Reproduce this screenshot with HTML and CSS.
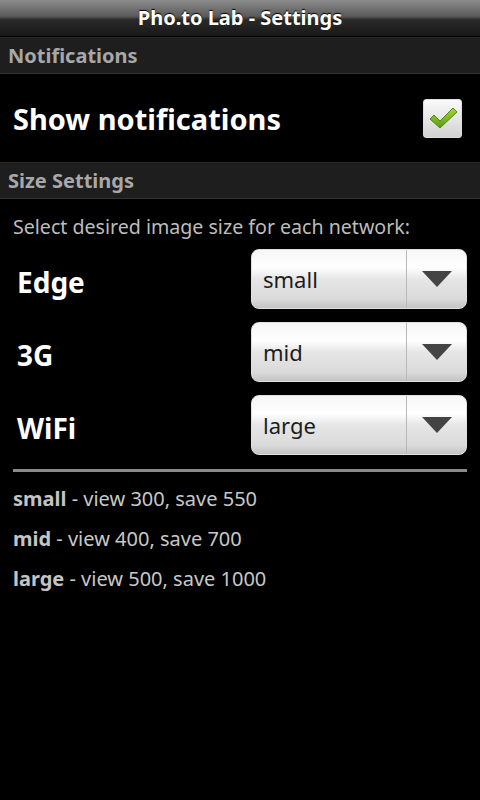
FILE: index.html
```html
<!DOCTYPE html>
<html>
<head>
<meta charset="utf-8">
<link rel="stylesheet" href="styles.css">
</head>
<body>
<div class="titlebar">Pho.to Lab - Settings</div>
<div class="cat">Notifications</div>
<div class="pref">
  <span class="pref-title">Show notifications</span>
  <span class="checkbox">
    <svg width="30" height="26" viewBox="0 0 30 26">
      <defs>
        <linearGradient id="g" x1="0" y1="0" x2="0" y2="1">
          <stop offset="0" stop-color="#a6d83a"/>
          <stop offset="1" stop-color="#5a9a10"/>
        </linearGradient>
      </defs>
      <path d="M2 14 L6 10 L12 16 L25 3 L29 7 L12 23 Z" fill="url(#g)" stroke="#4f8a0c" stroke-width="1" stroke-linejoin="round"/>
    </svg>
  </span>
</div>
<div class="cat">Size Settings</div>
<div class="content">
  <div class="hint">Select desired image size for each network:</div>
  <div class="rows">
    <div class="row"><span class="label">Edge</span><div class="spinner"><span class="val">small</span><span class="arrow"></span></div></div>
    <div class="row"><span class="label">3G</span><div class="spinner"><span class="val">mid</span><span class="arrow"></span></div></div>
    <div class="row"><span class="label">WiFi</span><div class="spinner"><span class="val">large</span><span class="arrow"></span></div></div>
  </div>
  <div class="divider"></div>
  <div class="legend">
    <div><b>small</b> - view 300, save 550</div>
    <div><b>mid</b> - view 400, save 700</div>
    <div><b>large</b> - view 500, save 1000</div>
  </div>
</div>
</body>
</html>
```

FILE: styles.css
```css
html, body {
  margin: 0;
  padding: 0;
  background: #000;
  width: 480px;
  height: 800px;
  overflow: hidden;
  font-family: "Noto Sans", "Open Sans", sans-serif;
}
.titlebar {
  height: 36px;
  line-height: 36px;
  text-align: center;
  color: #fff;
  font-weight: bold;
  font-size: 20px;
  background: linear-gradient(#8c8c8c 0%, #5a5a5a 45%, #2a2a2a 55%, #181818 100%);
  border-bottom: 1px solid #000;
  text-shadow: 0 -1px 1px #000;
}
.cat {
  height: 35px;
  line-height: 35px;
  padding-left: 8px;
  color: #a8a8a8;
  font-weight: bold;
  font-size: 20px;
  background: #1e1e1e;
  border-top: 1px solid #2a2a2a;
  border-bottom: 1px solid #333;
}
.pref {
  height: 88px;
  display: flex;
  align-items: center;
  justify-content: space-between;
  padding: 0 18px 0 13px;
}
.pref-title {
  color: #fff;
  font-weight: bold;
  font-size: 29px;
}
.checkbox {
  width: 37px;
  height: 37px;
  border: 1px solid #ddd;
  border-radius: 3px;
  background: linear-gradient(#fafafa, #d2d2d2);
  display: flex;
  align-items: center;
  justify-content: center;
}
.content {
  padding: 14px 13px 0 13px;
}
.hint {
  color: #bdbdbd;
  font-size: 19.6px;
  line-height: 28px;
}
.rows {
  display: flex;
  flex-direction: column;
  gap: 13px;
  margin-top: 8px;
}
.row {
  display: flex;
  align-items: center;
  justify-content: space-between;
  height: 60px;
}
.label {
  color: #fff;
  font-weight: bold;
  font-size: 28px;
  padding-left: 4px;
  padding-top: 5px;
}
.spinner {
  width: 214px;
  height: 58px;
  border: 1px solid #e0e0e0;
  border-radius: 8px;
  background: linear-gradient(#f6f6f6 0%, #ffffff 30%, #e6e6e6 50%, #dadada 85%, #c4c4c4 100%);
  display: flex;
  box-sizing: content-box;
}
.val {
  flex: 1;
  display: flex;
  align-items: center;
  padding-left: 11px;
  color: #1c1c1c;
  font-size: 22px;
}
.arrow {
  width: 59px;
  border-left: 1px solid #b8b8b8;
  display: flex;
  align-items: center;
  justify-content: center;
}
.arrow::after {
  content: "";
  width: 0;
  height: 0;
  border-left: 15px solid transparent;
  border-right: 15px solid transparent;
  border-top: 16px solid #444;
}
.divider {
  height: 3px;
  background: #8a8a8a;
  margin-top: 14px;
}
.legend {
  margin-top: 7px;
  color: #c8c8c8;
  font-size: 20px;
  line-height: 40px;
}
.legend b {
  color: #c4c4c4;
}
```
